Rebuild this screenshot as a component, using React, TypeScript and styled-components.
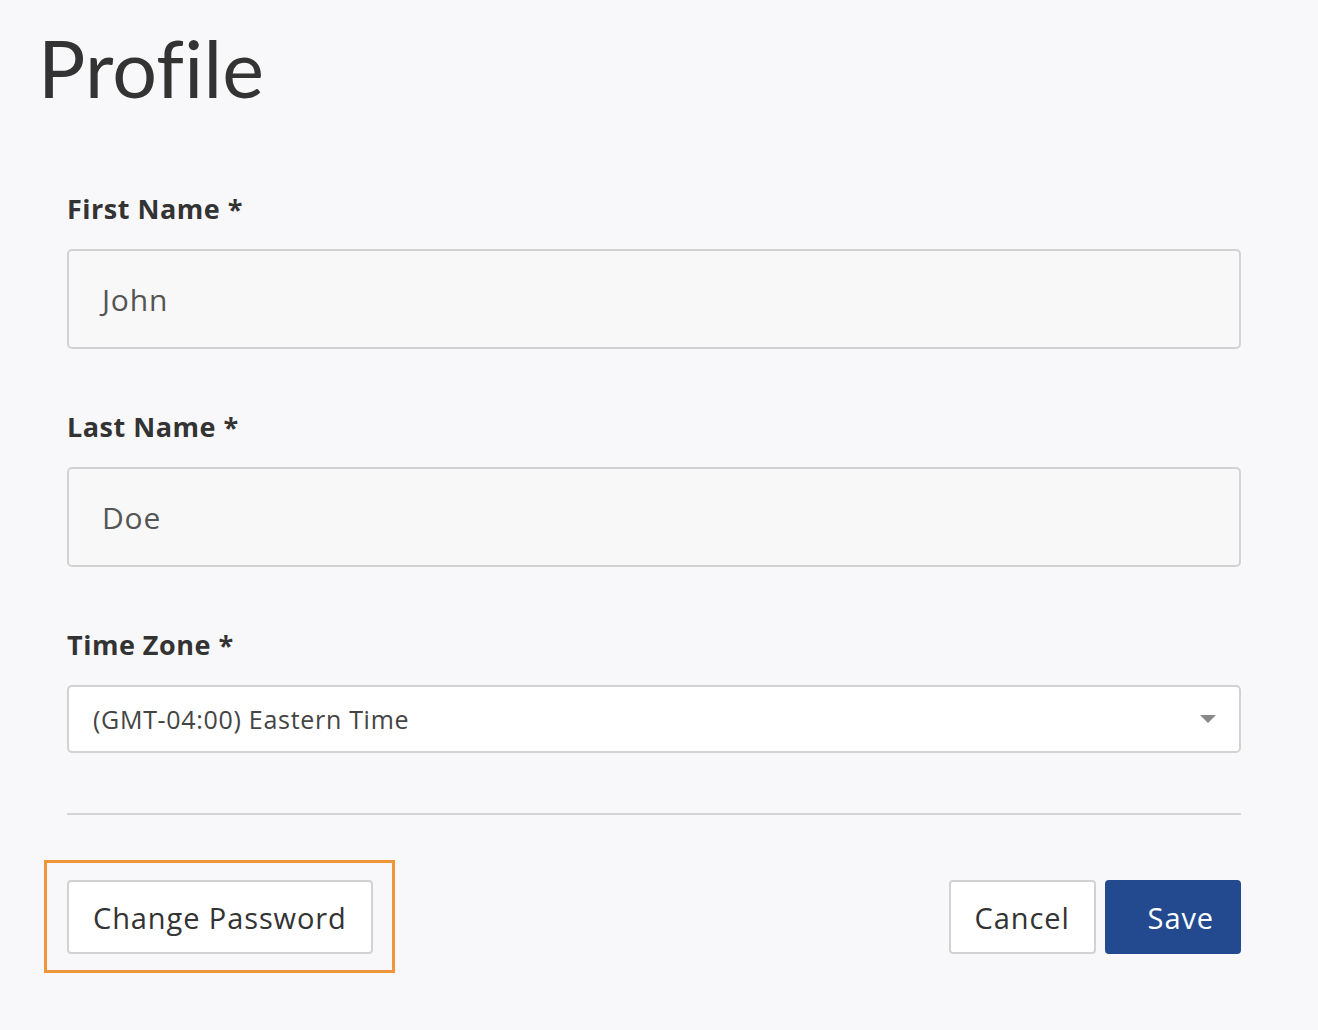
import React from "react";
import styled, { createGlobalStyle } from "styled-components";

const Global = createGlobalStyle`
  html, body { margin: 0; padding: 0; background: #f8f8fa; }
  body { font-family: "Open Sans", Lato, Arial, sans-serif; color: #333; }
`;

const Page = styled.div`
  width: 1318px;
  min-height: 1030px;
  box-sizing: border-box;
  padding: 22px 77px 0 38px;
`;

const Title = styled.h1`
  margin: 0;
  font-family: Lato, "Open Sans", Arial, sans-serif;
  font-size: 79px;
  font-weight: 400;
  line-height: 92px;
  color: #333;
  letter-spacing: 0.2px;
`;

const Form = styled.form`
  margin: 77px 0 0 29px;
  display: flex;
  flex-direction: column;
`;

const Field = styled.div`
  display: flex;
  flex-direction: column;
  gap: 22px;
  margin-bottom: 60px;
  &:last-of-type { margin-bottom: 69px; }
`;

const Label = styled.label`
  font-size: 27px;
  font-weight: 700;
  line-height: 36px;
  letter-spacing: 0.5px;
  color: #333;
`;

const TextInput = styled.div`
  height: 100px;
  box-sizing: border-box;
  border: 2px solid #d2d2d4;
  border-radius: 5px;
  background: #f8f8f8;
  display: flex;
  align-items: center;
  padding-left: 33px;
  font-size: 30px;
  letter-spacing: 0.8px;
  color: #555;
`;

const Select = styled.div`
  height: 68px;
  box-sizing: border-box;
  border: 2px solid #d2d2d4;
  border-radius: 5px;
  background: #fff;
  display: flex;
  align-items: center;
  justify-content: space-between;
  padding: 0 23px 0 24px;
  font-size: 25px;
  letter-spacing: 0.7px;
  color: #444;
`;

const Caret = styled.span`
  width: 0;
  height: 0;
  border-left: 8px solid transparent;
  border-right: 8px solid transparent;
  border-top: 8px solid #888;
`;

const Divider = styled.hr`
  margin: 0;
  border: 0;
  border-top: 2px solid #d4d4d6;
`;

const Actions = styled.div`
  margin-top: 65px;
  display: flex;
  align-items: center;
  justify-content: space-between;
`;

const Focus = styled.div`
  margin: -20px 0 -19px -23px;
  padding: 17px 19px 16px 20px;
  border: 3px solid #f0963a;
  display: flex;
`;

const Button = styled.button<{ $primary?: boolean }>`
  height: 74px;
  box-sizing: border-box;
  padding: ${(p) => (p.$primary ? "0 25px 0 41px" : "0 24px")};
  border-radius: 4px;
  font-family: inherit;
  font-size: 29px;
  font-weight: 400;
  letter-spacing: 0.9px;
  border: 2px solid ${(p) => (p.$primary ? "#234a8f" : "#d2d2d4")};
  background: ${(p) => (p.$primary ? "#234a8f" : "#fff")};
  color: ${(p) => (p.$primary ? "#fff" : "#333")};
  cursor: pointer;
`;

const Right = styled.div`
  display: flex;
  gap: 9px;
`;

export default function App() {
  return (
    <>
      <Global />
      <Page>
        <Title>Profile</Title>
        <Form>
          <Field>
            <Label>First Name *</Label>
            <TextInput>John</TextInput>
          </Field>
          <Field>
            <Label>Last Name *</Label>
            <TextInput>Doe</TextInput>
          </Field>
          <Field>
            <Label>Time Zone *</Label>
            <Select>
              <span>(GMT-04:00) Eastern Time</span>
              <Caret />
            </Select>
          </Field>
          <Divider />
          <Actions>
            <Focus>
              <Button type="button">Change Password</Button>
            </Focus>
            <Right>
              <Button type="button">Cancel</Button>
              <Button type="button" $primary>Save</Button>
            </Right>
          </Actions>
        </Form>
      </Page>
    </>
  );
}
